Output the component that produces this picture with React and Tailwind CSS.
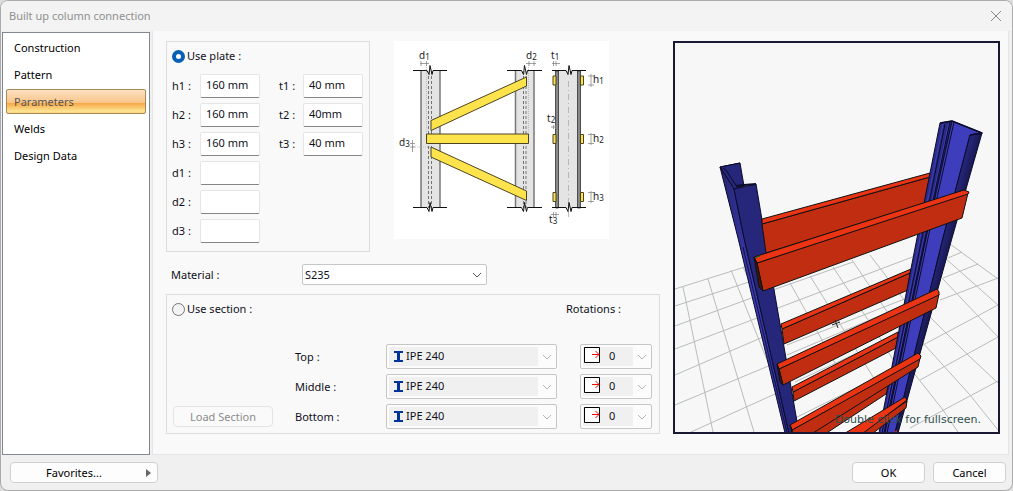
import { useState } from "react";

const tabs = ["Construction", "Pattern", "Parameters", "Welds", "Design Data"];

const heights = [
  { name: "h1", value: "160 mm" },
  { name: "h2", value: "160 mm" },
  { name: "h3", value: "160 mm" },
];

const distances = [
  { name: "d1", value: "" },
  { name: "d2", value: "" },
  { name: "d3", value: "" },
];

const thicknesses = [
  { name: "t1", value: "40 mm" },
  { name: "t2", value: "40mm" },
  { name: "t3", value: "40 mm" },
];

const sections = ["Top", "Middle", "Bottom"];

function Chevron({ className }) {
  return (
    <svg
      viewBox="0 0 10 6"
      className={`pointer-events-none absolute top-1/2 right-1 h-[6px] w-[10px] -translate-y-1/2 ${className}`}
      fill="none"
      stroke="currentColor"
    >
      <path d="M1 1l4 4 4-4" />
    </svg>
  );
}

function Field({ name, value }) {
  return (
    <div className="flex items-center justify-between">
      <label htmlFor={name}>{name} :</label>
      <input
        id={name}
        defaultValue={value}
        className="h-6 w-[60px] rounded-[2px] border border-[#e5e5e5] border-b-[#858585] bg-white px-[5px] pb-[3px] outline-none"
      />
    </div>
  );
}

function Radio({ id, label, checked, onChange }) {
  return (
    <div className="flex items-center gap-[2px]">
      <input
        type="radio"
        name="mode"
        id={id}
        checked={checked}
        onChange={onChange}
        className="h-[13px] w-[13px] appearance-none rounded-full border border-[#767676] bg-[#f3f3f3] checked:border-4 checked:border-[#0560b6] checked:bg-white"
      />
      <label htmlFor={id}>{label}</label>
    </div>
  );
}

// zigzag cut mark across a column
function Break({ x1, x2, y }) {
  const m = (x1 + x2) / 2;
  return (
    <path
      d={`M${x1} ${y}H${m - 3}L${m - 1} ${y + 4}L${m} ${y - 5}L${m + 2} ${y + 4}L${m + 3} ${y}H${x2}`}
      fill="none"
      stroke="#111"
    />
  );
}

function Mark({ x, y, letter, index }) {
  return (
    <text x={x} y={y} fontSize="10" fill="#222">
      {letter}
      <tspan fontSize="8" dy="1">
        {index}
      </tspan>
    </text>
  );
}

function PlateDiagram() {
  return (
    <svg
      viewBox="394 40 215 198"
      className="h-auto w-[215px] bg-white"
      role="img"
      aria-label="Plate dimensions"
    >
      <g fill="#e4e4e4">
        <path d="M421 70h19v137h-19zM515 70h19v137h-19zM556 70h25v137h-25z" />
      </g>
      <g stroke="#777" fill="none">
        <path d="M421 70v137M440 70v137M515.500 70v137M534 70v137" strokeWidth="1.500" />
        <path
          d="M428.500 75v132M431.500 75v132M523.500 75v132M526 75v132"
          stroke="#555"
          strokeWidth=".8"
          strokeDasharray="3 2"
        />
        <path d="M426.500 62v72M528.500 62v72M413 146h18" stroke="#aaa" strokeWidth=".7" strokeDasharray="1 1" />
        <path d="M568.500 80v138" stroke="#aaa" strokeWidth=".8" strokeDasharray="6 3 1 3" />
      </g>
      <path d="M555.500 70h3v137h-3zM577.500 70h3v137h-3z" fill="#888" stroke="#333" strokeWidth=".8" />
      <g fill="#ffe34d" stroke="#4a4520" strokeWidth="1">
        <path d="M431 119.500L526.500 76v9L431 129.500z" />
        <path d="M426.500 133h102v9.500h-102z" />
        <path d="M431 146L526.500 190v9.500L431 156z" />
        <path d="M553 75h3v9h-3zM553 133.500h3v9h-3zM553 191.500h3v9h-3z" />
        <path d="M580.500 75h3v9h-3zM580.500 133.500h3v9h-3zM580.500 191.500h3v9h-3z" />
      </g>
      <Break x1={413} x2={447} y={69.5} />
      <Break x1={507} x2={542} y={69.5} />
      <Break x1={552} x2={586} y={69.5} />
      <Break x1={413} x2={447} y={206.5} />
      <Break x1={507} x2={542} y={206.5} />
      <Break x1={552} x2={586} y={206.5} />
      <g stroke="#888" strokeWidth=".8" fill="none">
        <path d="M420 62.500h9M421 60v5M426.500 60v5M526 62.500h10M529 60v5M534 60v5M552 62.500h8M553.500 60v5M556 60v5" />
        <path d="M551 126h7M553.500 124v4M556 124v4M551 213.500h8M553.500 211v5M556 211v5" />
        <path d="M412.500 139v12M410 142.500h5M410 146h5" />
        <path d="M591 73v13M588 75h6M588 84h6M591 132v12M588 133.500h6M588 142.500h6M591 190v12M588 191.500h6M588 200.500h6" />
      </g>
      <g className="font-['Noto_Sans',sans-serif]">
        <Mark x={419} y={58} letter="d" index="1" />
        <Mark x={526} y={58} letter="d" index="2" />
        <Mark x={551} y={58} letter="t" index="1" />
        <Mark x={593} y={82} letter="h" index="1" />
        <Mark x={593} y={141} letter="h" index="2" />
        <Mark x={593} y={199} letter="h" index="3" />
        <Mark x={547} y={121} letter="t" index="2" />
        <Mark x={549} y={222} letter="t" index="3" />
        <Mark x={399} y={145} letter="d" index="3" />
      </g>
    </svg>
  );
}

// face and its lit top edge, each a list of polygon points
const backBeams = [
  ["762,224 930,177 925,203 766,253", "762,219 930,173 930,177 762,224"],
  ["782,329 910,273 908,290 784,344", "781,324 911,269 910,273 782,329"],
  ["793,392 898,337 896,348 794,401", "792,387 898,332 898,337 793,392"],
  ["800,440 889,384 886,394 816,440", "800,438 889,382 889,384 800,440"],
];

const frontBeams = [
  ["757,263 968,193 962,218 763,291", "754,257 964,190 969,192 968,194 757,263"],
  ["779,369 939,294 936,308 783,385", "777,364 937,289 939,292 939,295 779,369"],
  ["792,430 920,358 918,367 794,445", "790,425 918,353 921,356 920,359 792,430"],
  ["858,435 907,401 906,408 868,437", "842,435 905,397 907,400 858,437"],
];

function Beam({ points }) {
  return (
    <g stroke="#111" strokeWidth="1" strokeLinejoin="round">
      <polygon points={points[0]} fill="#c12d11" />
      <polygon points={points[1]} fill="#ea3413" />
    </g>
  );
}

function ModelView() {
  return (
    <svg viewBox="675 43 323 389" className="block h-auto w-full bg-[#f7f7f7]" role="img" aria-label="3D model">
      <defs>
        <linearGradient id="edge" x1="0" x2="1" y1="0" y2="0">
          <stop offset="0" stopColor="#24246c" />
          <stop offset=".5" stopColor="#3b3bb5" />
          <stop offset="1" stopColor="#2d2d8c" />
        </linearGradient>
        <linearGradient id="shade" gradientUnits="userSpaceOnUse" x1="938" y1="240" x2="952" y2="244">
          <stop offset="0" stopColor="#2b2b88" />
          <stop offset="1" stopColor="#16164c" />
        </linearGradient>
      </defs>

      <g stroke="#b8bcba" strokeWidth="1" fill="none">
        <path d="M675 289L748 266M675 306L752 281M675 326L757 296M675 349L765 315M675 375L770 334M675 405L778 362M691 432L786 389" />
        <path d="M683 287L713 432M708 279L754 432M731 270L787 410M743 267L790 370" />
        <path d="M770 291L853 262M778 308L915 256M782 326L915 271M787 345L907 298M787 355L905 305M795 382L900 333M795 418L890 371" />
        <path d="M790 283L840 372M810 276L875 380M833 267L880 338L905 380M852 260L905 338M870 255L908 305" />
        <path d="M948 258L962 252M943 278L978 264M940 300L998 278M923 345L998 305M920 380L998 337M910 428L998 381" />
        <path d="M950 244L998 279M945 258L998 305M942 278L998 337M930 317L968 355L998 383M923 343L970 395L998 430M913 372L943 410L958 432" />
      </g>

      <g stroke="#0b0b2a" strokeWidth="1" strokeLinejoin="round">
        <polygon points="720,167 740,163 744,186 734,189" fill="#26267a" />
        <path d="M723 168l3 2 11 17M720 167l20-4" fill="none" />
        <polygon points="720,167 734,189 744,238 789,433 785,433 738,238" fill="url(#edge)" />
        <polygon points="734,189 756,184 765,238 799,433 789,433 744,238" fill="#26267a" />
        <path d="M736 186l8-1 12-1" fill="none" strokeWidth="2" />
        <path d="M743 247L787 433" fill="none" strokeWidth=".8" />
      </g>

      {backBeams.map((points, i) => (
        <Beam key={i} points={points} />
      ))}

      <g stroke="#0b0b2a" strokeWidth="1" strokeLinejoin="round">
        <polygon points="940,123 952,121 926,238 885,433 879,433 917,238" fill="#2b2b88" />
        <polygon points="952,121 982,133 970,135 943,238 895,433 885,433 926,238" fill="#3e3ebd" />
        <polygon points="970,135 982,133 952,238 898,433 895,433 943,238" fill="url(#shade)" />
        <path d="M943 124L920 238L881 433M949 123L924 238L883 433" fill="none" stroke="#3e3ebd" />
        <path d="M945 124L922 238L882 433M950 122L925 238L884 433M954 122L928 238L887 433" fill="none" />
        <path d="M940 123l12-2 30 12-12 2" fill="none" strokeWidth="1.500" />
      </g>

      {frontBeams.map((points, i) => (
        <Beam key={i} points={points} />
      ))}
      <g fill="#3d170c" stroke="#111" strokeWidth="1">
        <path d="M754 257l3 6 6 28-4-4zM777 364l2 5 4 16-3-3zM790 425l2 5v3z" />
        <path d="M755 258l5-2" stroke="#0b6b34" />
      </g>
      <path d="M892 433l5-3v3z" fill="#c12d11" />
      <path d="M832 325l8-3M835 320l3 8" stroke="#222" fill="none" />
    </svg>
  );
}

function SectionRow({ name, disabled }) {
  const id = name.toLowerCase();
  return (
    <>
      <label htmlFor={id}>{name} :</label>
      <div className="relative mr-[23px] h-[25px] rounded-[2px] border border-[#c6c6c6] bg-[#fcfcfc]">
        <div className="absolute inset-y-[2px] right-[18px] left-[2px] bg-[#f0f0f0]" />
        <svg viewBox="0 0 9 11" className="absolute top-[6px] left-[7px] h-[11px] w-[9px]" fill="#003399">
          <path d="M0 0h9v2H6v7h3v2H0V9h3V2H0z" />
        </svg>
        <select id={id} disabled={disabled} className="relative h-full w-full appearance-none bg-transparent pb-px pl-[19px] opacity-100 outline-none">
          <option>IPE 240</option>
        </select>
        <Chevron className="text-[#b5b5b5]" />
      </div>
      <div className="relative h-[25px] rounded-[2px] border border-[#c6c6c6] bg-[#fcfcfc]">
        <div className="absolute inset-y-[2px] right-[18px] left-[2px] bg-[#f0f0f0]" />
        <svg viewBox="0 0 16 16" className="absolute top-[2px] left-[3px] h-4 w-4">
          <path d="M.5.500h15v15H.5z" fill="#fff" stroke="#000" />
          <path d="M8 7.500h7M11.500 4l3.500 3.500L11.500 11" fill="none" stroke="#f00" />
        </svg>
        <select
          aria-label={`${name} rotation`}
          disabled={disabled}
          className="relative h-full w-full appearance-none bg-transparent pb-px pl-7 opacity-100 outline-none"
        >
          <option>0</option>
        </select>
        <Chevron className="text-[#b5b5b5]" />
      </div>
    </>
  );
}

function App() {
  const [tab, setTab] = useState("Parameters");
  const [mode, setMode] = useState("plate");

  return (
    <div className="min-h-screen bg-[#dcdcdc] font-['Noto_Sans',sans-serif] text-[11px] leading-4 text-black">
      <div className="flex min-h-screen flex-col overflow-hidden rounded-lg border border-[#ababab] bg-[#f0f0f0]">
        <header className="flex h-[30px] shrink-0 items-center justify-between bg-[#f3f3f3] pr-[10px] pl-2">
          <h1 className="text-[#8f8f8f]">Built up column connection</h1>
          <button aria-label="Close" className="text-[#8a8a8a]">
            <svg viewBox="0 0 12 12" className="h-3 w-3" fill="none" stroke="currentColor">
              <path d="M1 1l10 10M11 1L1 11" />
            </svg>
          </button>
        </header>

        <main className="flex flex-1 gap-[2px] pr-[3px] pl-px">
          <nav className="mt-px flex w-[148px] shrink-0 flex-col gap-[2px] border border-[#828790] bg-white px-[3px] pt-[2px]">
            {tabs.map((t) => (
              <button
                key={t}
                onClick={() => setTab(t)}
                className={
                  t === tab
                    ? "h-[25px] rounded-[2px] border border-[#a58a55] bg-[linear-gradient(#fde0c2,#f9c68a_55%,#f7a441_56%,#fde493_92%,#fbd27a)] pl-[7px] text-left text-[#555]"
                    : "h-[25px] rounded-[2px] border border-transparent pl-[7px] text-left"
                }
              >
                {t}
              </button>
            ))}
          </nav>

          <div className="flex flex-1 items-start gap-[13px] border-r border-b border-l border-[#e5e5e5] bg-[#f9f9f9] pt-[10px] pr-2 pb-5 pl-[13px]">
            <div className="flex-[494] text-[#101020]">
              <div className="flex items-start gap-6">
                <div className="flex w-[204px] flex-col gap-[10px] border border-[#dcdcdc] pt-[6px] pr-1 pb-2 pl-[5px]">
                  <Radio id="use-plate" label="Use plate :" checked={mode === "plate"} onChange={() => setMode("plate")} />
                  <div className="flex items-start gap-[19px]">
                    <div className="flex w-[88px] flex-col gap-[5px]">
                      {heights.map((f) => (
                        <Field key={f.name} {...f} />
                      ))}
                      {distances.map((f) => (
                        <Field key={f.name} {...f} />
                      ))}
                    </div>
                    <div className="flex w-[84px] flex-col gap-[5px]">
                      {thicknesses.map((f) => (
                        <Field key={f.name} {...f} />
                      ))}
                    </div>
                  </div>
                </div>
                <PlateDiagram />
              </div>

              <div className="mt-3 mb-[9px] flex items-center pl-[5px]">
                <label htmlFor="material" className="w-[131px]">
                  Material :
                </label>
                <div className="relative h-[21px] w-[185px] rounded-[2px] border border-[#c6c6c6] bg-white">
                  <select id="material" className="h-full w-full appearance-none bg-transparent pl-[2px] outline-none">
                    <option>S235</option>
                  </select>
                  <Chevron className="text-[#555]" />
                </div>
              </div>

              <div className="border border-[#dcdcdc] px-[5px] pt-[6px] pb-1">
                <div className="flex items-center justify-between">
                  <Radio id="use-section" label="Use section :" checked={mode === "section"} onChange={() => setMode("section")} />
                  <span className="w-[88px]">Rotations :</span>
                </div>
                <div className="mt-[27px] flex items-end pr-[2px] pl-px">
                  <button
                    disabled={mode !== "section"}
                    className="mb-[2px] h-[21px] w-[100px] shrink-0 rounded-[4px] border border-[#e3e3e3] bg-[#fafafa] text-[#8c8c8c]"
                  >
                    Load Section
                  </button>
                  <div className="ml-[22px] grid flex-1 grid-cols-[91px_1fr_72px] items-center gap-y-[5px]">
                    {sections.map((name) => (
                      <SectionRow key={name} name={name} disabled={mode !== "section"} />
                    ))}
                  </div>
                </div>
              </div>
            </div>

            <div className="relative flex-[323] border-2 border-[#191933]">
              <ModelView />
              <p className="absolute right-[17px] bottom-1 font-['DejaVu_Sans',sans-serif] text-[#2f4f4f]">Double click for fullscreen.</p>
            </div>
          </div>
        </main>

        <footer className="flex h-[35px] shrink-0 items-center justify-between pr-[6px] pl-[9px]">
          <button className="relative h-[21px] w-[148px] rounded-[4px] border border-[#d0d0d0] bg-[#fdfdfd] pr-5">
            Favorites...
            <svg viewBox="0 0 5 8" className="absolute top-[6px] right-[6px] h-2 w-[5px]" fill="#666">
              <path d="M0 0l5 4-5 4z" />
            </svg>
          </button>
          <div className="flex gap-2">
            <button className="h-[21px] w-[73px] rounded-[4px] border border-[#d0d0d0] bg-[#fdfdfd]">OK</button>
            <button className="h-[21px] w-[73px] rounded-[4px] border border-[#d0d0d0] bg-[#fdfdfd]">Cancel</button>
          </div>
        </footer>
      </div>
    </div>
  );
}

export default App;
